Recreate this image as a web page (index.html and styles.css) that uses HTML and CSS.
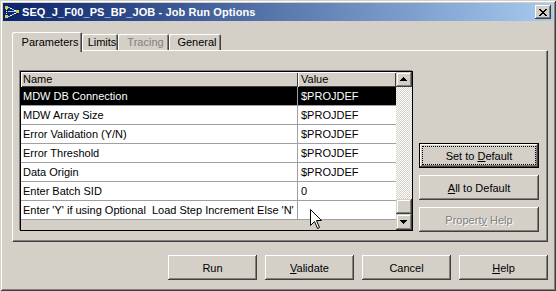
FILE: index.html
```html
<!DOCTYPE html>
<html>
<head>
<meta charset="utf-8">
<title>Job Run Options</title>
<link rel="stylesheet" href="styles.css">
</head>
<body>
<div class="window">
  <div class="titlebar">
    <svg class="app-icon" width="14" height="14" viewBox="0 0 14 14" shape-rendering="crispEdges">
      <rect x="0" y="1" width="3" height="3" fill="#D8D040"/>
      <rect x="0" y="10" width="3" height="3" fill="#D8D040"/>
      <rect x="11" y="5" width="3" height="3" fill="#D8D040"/>
      <rect x="1" y="4" width="1" height="1" fill="#fff"/>
      <rect x="1" y="6" width="1" height="1" fill="#fff"/>
      <rect x="1" y="8" width="1" height="1" fill="#fff"/>
      <rect x="3" y="2" width="2" height="1" fill="#A0C0F0"/>
      <rect x="5" y="3" width="2" height="1" fill="#fff"/>
      <rect x="7" y="4" width="2" height="1" fill="#A0C0F0"/>
      <rect x="9" y="5" width="2" height="1" fill="#fff"/>
      <rect x="3" y="6" width="8" height="1" fill="#A0C0F0"/>
      <rect x="3" y="11" width="2" height="1" fill="#A0C0F0"/>
      <rect x="5" y="10" width="2" height="1" fill="#fff"/>
      <rect x="7" y="9" width="2" height="1" fill="#A0C0F0"/>
      <rect x="9" y="8" width="2" height="1" fill="#fff"/>
    </svg>
    <span class="title">SEQ_J_F00_PS_BP_JOB - Job Run Options</span>
    <div class="close-btn">
      <svg width="8" height="7" viewBox="0 0 8 7" shape-rendering="crispEdges">
        <path d="M0 0h2v1h-2zM6 0h2v1h-2zM1 1h2v1h-2zM5 1h2v1h-2zM2 2h4v1h-4zM3 3h2v1h-2zM2 4h4v1h-4zM1 5h2v1h-2zM5 5h2v1h-2zM0 6h2v1h-2zM6 6h2v1h-2z" fill="#000"/>
      </svg>
    </div>
  </div>

  <div class="content">
    <div class="tabs">
      <div class="tab active tab-parameters">Parameters</div>
      <div class="tab tab-limits">Limits</div>
      <div class="tab disabled tab-tracing">Tracing</div>
      <div class="tab tab-general">General</div>
    </div>

    <div class="panel">
      <div class="grid">
        <div class="grid-body">
          <div class="grid-head">
            <div class="hcell name">Name</div>
            <div class="hcell value">Value</div>
          </div>
          <div class="row selected"><div class="cell name">MDW DB Connection</div><div class="cell value">$PROJDEF</div></div>
          <div class="row"><div class="cell name">MDW Array Size</div><div class="cell value">$PROJDEF</div></div>
          <div class="row"><div class="cell name">Error Validation (Y/N)</div><div class="cell value">$PROJDEF</div></div>
          <div class="row"><div class="cell name">Error Threshold</div><div class="cell value">$PROJDEF</div></div>
          <div class="row"><div class="cell name">Data Origin</div><div class="cell value">$PROJDEF</div></div>
          <div class="row"><div class="cell name">Enter Batch SID</div><div class="cell value">0</div></div>
          <div class="row"><div class="cell name">Enter 'Y' if using Optional&nbsp; Load Step Increment Else 'N'</div><div class="cell value"></div></div>
          <div class="grid-fill"></div>
        </div>
        <div class="vscroll">
          <div class="sbtn">
            <svg width="7" height="4" viewBox="0 0 7 4" shape-rendering="crispEdges"><path d="M3 0h1v1h-1zM2 1h3v1h-3zM1 2h5v1h-5zM0 3h7v1h-7z" fill="#000"/></svg>
          </div>
          <div class="track"></div>
          <div class="thumb"></div>
          <div class="sbtn down">
            <svg width="7" height="4" viewBox="0 0 7 4" shape-rendering="crispEdges"><path d="M0 0h7v1h-7zM1 1h5v1h-5zM2 2h3v1h-3zM3 3h1v1h-1z" fill="#000"/></svg>
          </div>
        </div>
      </div>

      <div class="side">
        <div class="btn default"><div class="focus"><span>Set to <u>D</u>efault</span></div></div>
        <div class="btn"><span><u>A</u>ll to Default</span></div>
        <div class="btn disabled"><span>Propert<u>y</u> Help</span></div>
      </div>
    </div>

    <div class="footer">
      <div class="btn wide"><span>Run</span></div>
      <div class="btn wide"><span><u>V</u>alidate</span></div>
      <div class="btn wide"><span>Cancel</span></div>
      <div class="btn wide"><span><u>H</u>elp</span></div>
    </div>
  </div>

  <svg class="cursor" width="13" height="21" viewBox="0 0 13 21">
    <path d="M0.5 0.5 L0.5 16.5 L4.5 12.5 L7.5 19.5 L9.5 18.5 L6.5 11.5 L11.5 11.5 Z" fill="#fff" stroke="#000" stroke-width="1" stroke-linejoin="miter"/>
  </svg>
</div>
</body>
</html>
```

FILE: styles.css
```css
* {
  box-sizing: border-box;
}

html,
body {
  margin: 0;
  padding: 0;
}

body {
  background: #d4d0c8;
  font-family: "Liberation Sans", Arial, sans-serif;
  font-size: 11px;
  color: #000;
}

.window {
  position: relative;
  width: 556px;
  height: 291px;
  padding: 3px;
  background: #d4d0c8;
  box-shadow: inset 1px 1px 0 #d4d0c8, inset -1px -1px 0 #404040,
    inset 2px 2px 0 #ffffff, inset -2px -2px 0 #808080;
  display: flex;
  flex-direction: column;
  overflow: hidden;
}

/* ---------- title bar ---------- */
.titlebar {
  height: 18px;
  flex: none;
  display: flex;
  align-items: center;
  padding: 0 2px;
  background: linear-gradient(to right, #0a246a, #a6caf0);
}

.app-icon {
  flex: none;
}

.title {
  flex: 1;
  margin-left: 3px;
  color: #fff;
  font-weight: bold;
  font-size: 11px;
  letter-spacing: 0.1px;
  white-space: nowrap;
  line-height: 18px;
}

.close-btn {
  flex: none;
  width: 16px;
  height: 14px;
  background: #d4d0c8;
  display: flex;
  align-items: center;
  justify-content: center;
  box-shadow: inset -1px -1px 0 #404040, inset 1px 1px 0 #ffffff,
    inset -2px -2px 0 #808080;
}

/* ---------- content ---------- */
.content {
  flex: 1;
  display: flex;
  flex-direction: column;
  padding: 11px 5px 0 9px;
}

/* ---------- tabs ---------- */
.tabs {
  display: flex;
  align-items: flex-end;
  height: 18px;
  flex: none;
  position: relative;
  z-index: 1;
}

.tab {
  height: 16px;
  background: #d4d0c8;
  border-radius: 2px 2px 0 0;
  box-shadow: inset 1px 1px 0 #ffffff, inset -1px 0 0 #404040,
    inset -2px 0 0 #808080;
  text-align: center;
  line-height: 13px;
  padding: 2px 0 0 4px;
  white-space: nowrap;
}

.tab.active {
  height: 20px;
  margin-bottom: -2px;
  padding-top: 4px;
  padding-left: 6px;
}

.tab.disabled {
  color: #808080;
}

.tab-parameters {
  width: 70px;
}

.tab-limits {
  width: 36px;
}

.tab-tracing {
  width: 51px;
}

.tab-general {
  width: 52px;
}

/* ---------- panel ---------- */
.panel {
  flex: none;
  height: 192px;
  display: flex;
  gap: 6px;
  padding: 20px 8px 10px 7px;
  border-top: 1px solid #ffffff;
  border-left: 1px solid #ffffff;
  border-right: 1px solid #404040;
  border-bottom: 1px solid #404040;
  box-shadow: inset -1px -1px 0 #808080;
}

/* ---------- grid ---------- */
.grid {
  width: 393px;
  height: 160px;
  flex: none;
  display: flex;
  border: 1px solid #000;
  box-shadow: -1px -1px 0 #808080;
  background: #d4d0c8;
}

.grid-body {
  width: 375px;
  display: flex;
  flex-direction: column;
}

.grid-head {
  display: flex;
  height: 15px;
  flex: none;
}

.hcell {
  background: #d4d0c8;
  line-height: 14px;
  box-shadow: inset 1px 1px 0 #ffffff, inset -1px -1px 0 #404040;
  white-space: nowrap;
}

.hcell.name {
  width: 277px;
  padding-left: 2px;
}

.hcell.value {
  width: 98px;
  padding-left: 3px;
}

.row {
  display: flex;
  height: 19px;
  flex: none;
  background: #fff;
  border-bottom: 1px solid #a0a0a0;
}

.cell {
  line-height: 18px;
  white-space: nowrap;
  overflow: hidden;
}

.cell.name {
  width: 277px;
  padding-left: 2px;
  border-right: 1px solid #a0a0a0;
}

.cell.value {
  width: 98px;
  padding-left: 3px;
}

.row.selected {
  background: #000;
  color: #fff;
}

.grid-fill {
  flex: 1;
  background: #d4d0c8;
}

/* ---------- scrollbar ---------- */
.vscroll {
  width: 16px;
  flex: none;
  display: flex;
  flex-direction: column;
}

.sbtn,
.thumb {
  background: #d4d0c8;
  box-shadow: inset -1px -1px 0 #404040, inset 1px 1px 0 #d4d0c8,
    inset -2px -2px 0 #808080, inset 2px 2px 0 #ffffff;
}

.sbtn {
  height: 15px;
  flex: none;
  display: flex;
  align-items: center;
  justify-content: center;
  padding: 0 1px 1px 0;
}

.sbtn.down {
  height: 16px;
}

.track {
  flex: 1;
  background-color: #d4d0c8;
  background-image: conic-gradient(#ffffff 25%, #d4d0c8 0 50%, #ffffff 0 75%, #d4d0c8 0);
  background-size: 2px 2px;
}

.thumb {
  height: 15px;
  flex: none;
}

/* ---------- buttons ---------- */
.side {
  width: 120px;
  flex: none;
  display: flex;
  flex-direction: column;
  gap: 7px;
  padding-top: 72px;
}

.btn {
  height: 25px;
  flex: none;
  background: #d4d0c8;
  display: flex;
  align-items: center;
  justify-content: center;
  white-space: nowrap;
  box-shadow: inset -1px -1px 0 #404040, inset 1px 1px 0 #ffffff,
    inset -2px -2px 0 #808080, inset 2px 2px 0 #d4d0c8;
}

.btn u {
  text-decoration-thickness: 1px;
  text-underline-offset: 1px;
}

.btn.default {
  border: 1px solid #000;
  padding: 2px;
  align-items: stretch;
  justify-content: stretch;
}

.btn .focus {
  flex: 1;
  border: 1px dotted #000;
  display: flex;
  align-items: center;
  justify-content: center;
}

.btn.disabled {
  color: #808080;
  text-shadow: 1px 1px 0 #ffffff;
}

.footer {
  flex: none;
  display: flex;
  justify-content: flex-end;
  gap: 8px;
  margin-top: 13px;
}

.btn.wide {
  width: 89px;
}

/* ---------- mouse pointer overlay ---------- */
.cursor {
  position: absolute;
  left: 310px;
  top: 209px;
}
```
